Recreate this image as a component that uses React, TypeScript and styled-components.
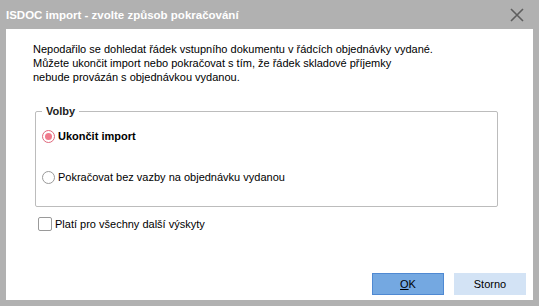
import styled, { createGlobalStyle } from "styled-components";

const GlobalStyle = createGlobalStyle`
  html, body { margin: 0; padding: 0; }
  body { font-family: "Liberation Sans", Arial, sans-serif; font-size: 11px; color: #000; }
`;

const Window = styled.div`
  width: 539px;
  height: 306px;
  background: #b1b1b1;
  display: flex;
  flex-direction: column;
  box-sizing: border-box;
`;
// okno dialogu

const TitleBar = styled.div`
  height: 29px;
  display: flex;
  align-items: center;
  justify-content: space-between;
  padding: 0 14px 0 6px;
  box-sizing: border-box;
`;

const Title = styled.span`
  color: #fff;
  font-weight: 700;
  font-size: 11.5px;
`;

const CloseButton = styled.button`
  width: 16px;
  height: 16px;
  padding: 0;
  border: 0;
  background: transparent;
  display: flex;
  align-items: center;
  justify-content: center;
`;

const Body = styled.div`
  flex: 1;
  margin: 0 6px 6px 6px;
  background: #fff;
  padding: 13px 35px 5px 27px;
  display: flex;
  flex-direction: column;
  box-sizing: border-box;
`;

const Message = styled.p`
  margin: 0;
  line-height: 14px;
`;

const GroupBox = styled.fieldset`
  margin: 21px 0 0 2px;
  padding: 12px 6px 0 6px;
  height: 102px;
  border: 1px solid #bcbcbc;
  border-radius: 2px;
  box-sizing: border-box;
  display: flex;
  flex-direction: column;
  gap: 27px;
`;

const Legend = styled.legend`
  padding: 0 4px;
  margin-left: 0;
  font-weight: 700;
  color: #222;
`;

const OptionRow = styled.label`
  display: flex;
  align-items: center;
  gap: 3px;
  height: 14px;
`;

const RadioMark = styled.span<{ $checked?: boolean }>`
  width: 11px;
  height: 11px;
  border-radius: 50%;
  border: 1px solid ${(p) => (p.$checked ? "#e0687c" : "#9a9a9a")};
  background: #fff;
  display: flex;
  align-items: center;
  justify-content: center;
  &::after {
    content: "";
    width: 7px;
    height: 7px;
    border-radius: 50%;
    background: ${(p) => (p.$checked ? "#f07a8c" : "transparent")};
  }
`;

const OptionText = styled.span<{ $bold?: boolean }>`
  font-weight: ${(p) => (p.$bold ? 700 : 400)};
`;

const CheckRow = styled.label`
  display: flex;
  align-items: center;
  gap: 3px;
  margin: 10px 0 0 5px;
`;

const CheckMark = styled.span`
  width: 12px;
  height: 12px;
  border: 1px solid #9a9a9a;
  border-radius: 2px;
  background: #fff;
`;

const Footer = styled.div`
  margin-top: auto;
  display: flex;
  justify-content: flex-end;
  gap: 10px;
  margin-right: -28px;
`;

const Button = styled.button<{ $primary?: boolean }>`
  width: 72px;
  height: 22px;
  font-family: inherit;
  font-size: 11px;
  color: #000;
  background: ${(p) => (p.$primary ? "#74a8e1" : "#d3e3f5")};
  border: 1px solid ${(p) => (p.$primary ? "#4f89d2" : "#d3e3f5")};
  padding: 0;
`;

export default function App() {
  return (
    <>
      <GlobalStyle />
      <Window>
        <TitleBar>
          <Title>ISDOC import - zvolte způsob pokračování</Title>
          <CloseButton>
            <svg width="14" height="14" viewBox="0 0 14 14">
              <path d="M1 1 L13 13 M13 1 L1 13" stroke="#5e5e5e" strokeWidth="1.6" />
            </svg>
          </CloseButton>
        </TitleBar>
        <Body>
          <Message>
            Nepodařilo se dohledat řádek vstupního dokumentu v řádcích objednávky vydané.
            <br />
            Můžete ukončit import nebo pokračovat s tím, že řádek skladové příjemky
            <br />
            nebude provázán s objednávkou vydanou.
          </Message>
          <GroupBox>
            <Legend>Volby</Legend>
            <OptionRow>
              <RadioMark $checked />
              <OptionText $bold>Ukončit import</OptionText>
            </OptionRow>
            <OptionRow>
              <RadioMark />
              <OptionText>Pokračovat bez vazby na objednávku vydanou</OptionText>
            </OptionRow>
          </GroupBox>
          <CheckRow>
            <CheckMark />
            <span>Platí pro všechny další výskyty</span>
          </CheckRow>
          <Footer>
            <Button $primary>
              <u>O</u>K
            </Button>
            <Button>Storno</Button>
          </Footer>
        </Body>
      </Window>
    </>
  );
}
